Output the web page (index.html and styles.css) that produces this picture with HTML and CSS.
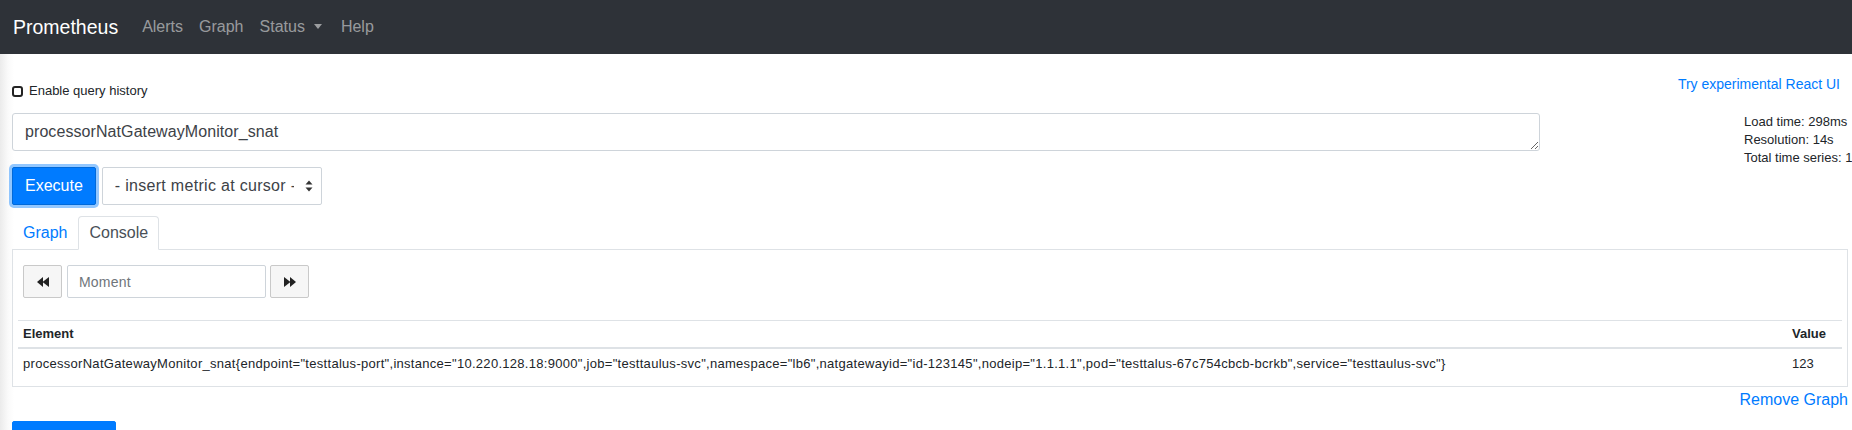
FILE: index.html
```html
<!DOCTYPE html>
<html lang="en">
<head>
<meta charset="utf-8">
<title>Prometheus Time Series Collection and Processing Server</title>
<link rel="stylesheet" href="styles.css">
</head>
<body>
<nav class="navbar">
  <a class="brand" href="#">Prometheus</a>
  <ul class="nav-links">
    <li><a href="#">Alerts</a></li>
    <li><a href="#">Graph</a></li>
    <li><a href="#">Status<span class="caret"></span></a></li>
    <li><a href="#">Help</a></li>
  </ul>
</nav>
<main class="page">
  <div class="topbar">
    <label class="history"><span class="checkbox"></span>Enable query history</label>
    <a class="react-link" href="#">Try experimental React UI</a>
  </div>
  <section class="panel">
    <div class="query-row">
      <div class="query-col">
        <textarea class="expr" rows="1">processorNatGatewayMonitor_snat</textarea>
        <div class="exec-row">
          <button class="btn-exec">Execute</button>
          <div class="metric-select">
            <span class="metric-text">- insert metric at cursor -</span>
            <svg class="select-arrows" width="8" height="12" viewBox="0 0 8 12"><polygon points="4,0.5 7.5,4.5 0.5,4.5"/><polygon points="0.5,7.5 7.5,7.5 4,11.5"/></svg>
          </div>
        </div>
      </div>
      <div class="stats">
        <div>Load time: 298ms</div>
        <div>Resolution: 14s</div>
        <div>Total time series: 1</div>
      </div>
    </div>
    <ul class="tabs">
      <li><a class="tab" href="#">Graph</a></li>
      <li><a class="tab active" href="#">Console</a></li>
    </ul>
    <div class="tab-box">
      <div class="time-ctrl">
        <button class="btn-step" title="Rewind time"><svg width="12" height="10" viewBox="0 0 12 10"><polygon points="0,5 6,0 6,10"/><polygon points="5.5,5 12,0 12,10"/></svg></button>
        <input class="moment" type="text" placeholder="Moment">
        <button class="btn-step" title="Advance time"><svg width="12" height="10" viewBox="0 0 12 10"><polygon points="0,0 6.5,5 0,10"/><polygon points="6,0 12,5 6,10"/></svg></button>
      </div>
      <table class="data">
        <thead>
          <tr><th>Element</th><th class="val">Value</th></tr>
        </thead>
        <tbody>
          <tr><td class="series">processorNatGatewayMonitor_snat{endpoint="testtalus-port",instance="10.220.128.18:9000",job="testtaulus-svc",namespace="lb6",natgatewayid="id-123145",nodeip="1.1.1.1",pod="testtalus-67c754cbcb-bcrkb",service="testtaulus-svc"}</td><td class="val">123</td></tr>
        </tbody>
      </table>
    </div>
    <div class="remove-row"><a href="#">Remove Graph</a></div>
  </section>
  <button class="btn-add">Add Graph</button>
</main>
</body>
</html>
```
FILE: styles.css
```css
* { box-sizing: border-box; }
html { overflow: hidden; }
body {
  margin: 0;
  font-family: "Liberation Sans", Arial, sans-serif;
  color: #212529;
  background: linear-gradient(to right, #ebebeb 0, #fafafa 8px, #ffffff 14px);
  min-height: 430px;
}
a { text-decoration: none; }

.navbar {
  height: 54px;
  background: #2e3238;
  display: flex;
  align-items: center;
  padding-left: 13px;
}
.brand {
  color: #fff;
  font-size: 19.5px;
  margin-right: 16px;
}
.nav-links {
  list-style: none;
  margin: 0;
  padding: 0;
  display: flex;
}
.nav-links a {
  display: block;
  padding: 0 8px;
  font-size: 16px;
  line-height: 24px;
  color: rgba(255, 255, 255, 0.52);
}
.caret {
  display: inline-block;
  margin-left: 9px;
  margin-right: 3px;
  vertical-align: 3px;
  border-top: 5px solid;
  border-left: 4.5px solid transparent;
  border-right: 4.5px solid transparent;
}

.page {
  padding: 0 4px 0 12px;
}
.topbar {
  display: flex;
  justify-content: space-between;
  align-items: flex-start;
  margin-top: 20px;
  height: 39px;
}
.history {
  display: flex;
  align-items: center;
  margin-top: 7px;
  font-size: 13px;
  line-height: 20px;
}
.checkbox {
  width: 11px;
  height: 11px;
  border: 2px solid #232323;
  border-radius: 3px;
  margin-right: 6px;
}
.react-link {
  font-size: 14px;
  line-height: 21px;
  color: #007bff;
  margin-right: 8px;
}

.query-row {
  display: grid;
  grid-template-columns: 1528px 1fr;
}
.expr {
  display: block;
  width: 100%;
  height: 38px;
  margin: 0;
  padding: 6px 12px;
  font-family: "Liberation Sans", Arial, sans-serif;
  font-size: 16px;
  line-height: 24px;
  letter-spacing: 0.08px;
  color: #3d4247;
  border: 1px solid #ced4da;
  border-radius: 3px;
  overflow: hidden;
  resize: vertical;
}
.exec-row {
  display: flex;
  gap: 6px;
  margin-top: 16px;
  height: 38px;
}
.btn-exec {
  height: 38px;
  padding: 0 12px;
  font-family: "Liberation Sans", Arial, sans-serif;
  font-size: 16px;
  color: #fff;
  background: #007bff;
  border: 1px solid #0069d9;
  border-radius: 2px;
  box-shadow: 0 0 0 3px rgba(38, 143, 255, 0.5);
}
.metric-select {
  display: flex;
  align-items: center;
  width: 220px;
  height: 38px;
  padding-left: 12px;
  border: 1px solid #ced4da;
  border-radius: 2px;
  font-size: 16px;
  color: #3d4247;
}
.metric-text {
  width: 179px;
  overflow: hidden;
  white-space: nowrap;
  letter-spacing: 0.3px;
}
.select-arrows {
  margin-left: auto;
  margin-right: 8px;
  fill: #333;
}
.stats {
  padding-left: 204px;
  font-size: 13px;
  line-height: 18px;
  white-space: nowrap;
}

.tabs {
  list-style: none;
  margin: 11px 0 0;
  padding: 0;
  display: flex;
  border-bottom: 1px solid #dee2e6;
}
.tab {
  display: block;
  margin-bottom: -1px;
  padding: 4px 10px;
  font-size: 16px;
  line-height: 24px;
  color: #007bff;
  border: 1px solid transparent;
  border-radius: 4px 4px 0 0;
}
.tab.active {
  color: #495057;
  background: #fff;
  border-color: #dee2e6 #dee2e6 #fff;
}
.tab-box {
  border: 1px solid #dee2e6;
  border-top: 0;
  padding: 15px 5px 7px;
}
.time-ctrl {
  display: flex;
  margin-left: 5px;
  height: 33px;
}
.btn-step {
  width: 39px;
  height: 33px;
  padding: 0;
  display: flex;
  align-items: center;
  justify-content: center;
  background: #f6f6f6;
  border: 1px solid #c9c9c9;
  border-radius: 2px;
  fill: #222;
}
.moment {
  width: 199px;
  height: 33px;
  margin: 0 4px 0 5px;
  padding: 0 11px;
  font-family: "Liberation Sans", Arial, sans-serif;
  font-size: 14px;
  letter-spacing: 0.2px;
  border: 1px solid #ced4da;
  border-radius: 2px;
}
.moment::placeholder { color: #6f757b; }

.data {
  width: 100%;
  margin-top: 22px;
  border-collapse: collapse;
  font-size: 13px;
  line-height: 18px;
}
.data th {
  text-align: left;
  padding: 4px 5px;
  border-top: 1px solid #dee2e6;
  border-bottom: 2px solid #dee2e6;
}
.data td {
  padding: 6px 5px;
}
.data .series { letter-spacing: 0.29px; }
.data .val { width: 55px; }

.remove-row {
  margin-top: 1px;
  text-align: right;
  font-size: 16px;
  line-height: 24px;
}
.remove-row a { color: #007bff; }

.btn-add {
  margin-top: 9px;
  width: 104px;
  height: 38px;
  font-family: "Liberation Sans", Arial, sans-serif;
  font-size: 16px;
  color: #fff;
  background: #007bff;
  border: 1px solid #007bff;
  border-radius: 2px;
}
```
